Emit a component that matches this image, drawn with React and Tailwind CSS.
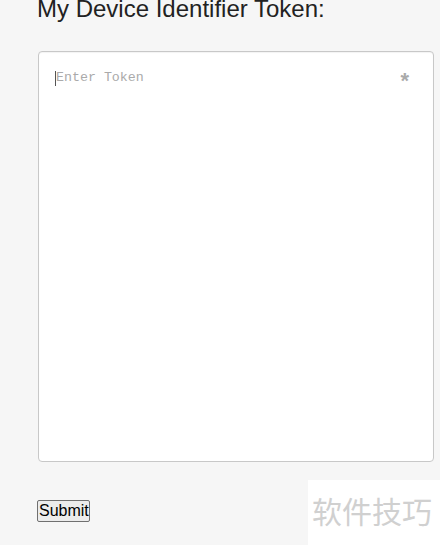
export default function App() {
  return (
    <div className="w-[440px] h-[545px] bg-[#f6f6f6] relative overflow-hidden" style={{ fontFamily: '"Liberation Sans", Arial, sans-serif' }}>
      <div className="pl-[37px] pr-[6px]">
        <h1 className="text-[24px] leading-[24px] text-[#222] mt-[-3px] font-normal whitespace-nowrap">My Device Identifier Token:</h1>
        <div className="ml-[1px] mt-[30px] h-[411px] bg-white border border-[#c8c8c8] rounded-[4px] relative shadow-[inset_0_1px_1px_rgba(0,0,0,0.05)]">
          <div className="flex items-start justify-between pl-[16px] pr-[22px] pt-[17px]">
            <div className="flex items-center">
              <span className="w-px h-[15px] bg-[#555]"></span>
              <span className="text-[13.3px] leading-[18px] text-[#aaa]" style={{ fontFamily: '"Liberation Mono", "Courier New", monospace' }}>Enter Token</span>
            </div>
            <span className="text-[22px] leading-[20px] text-[#aaa] font-bold mt-[2px] mr-[2px]">*</span>
          </div>
        </div>
        <div className="mt-[37px]">
          <button className="h-[22px] px-[1px] text-[16px] leading-[18px] text-black bg-[#ececec] border border-[#707070] rounded-[2px] w-[53px]">Submit</button>
        </div>
      </div>
      <div className="absolute left-[308px] top-[480px] w-[132px] h-[65px] bg-white flex items-start pl-[4px] pt-[12px]">
        <span className="text-[30px] leading-[36px] text-[#d0d0d0]" style={{ fontFamily: '"Noto Sans CJK SC", sans-serif' }}>软件技巧</span>
      </div>
    </div>
  );
}
